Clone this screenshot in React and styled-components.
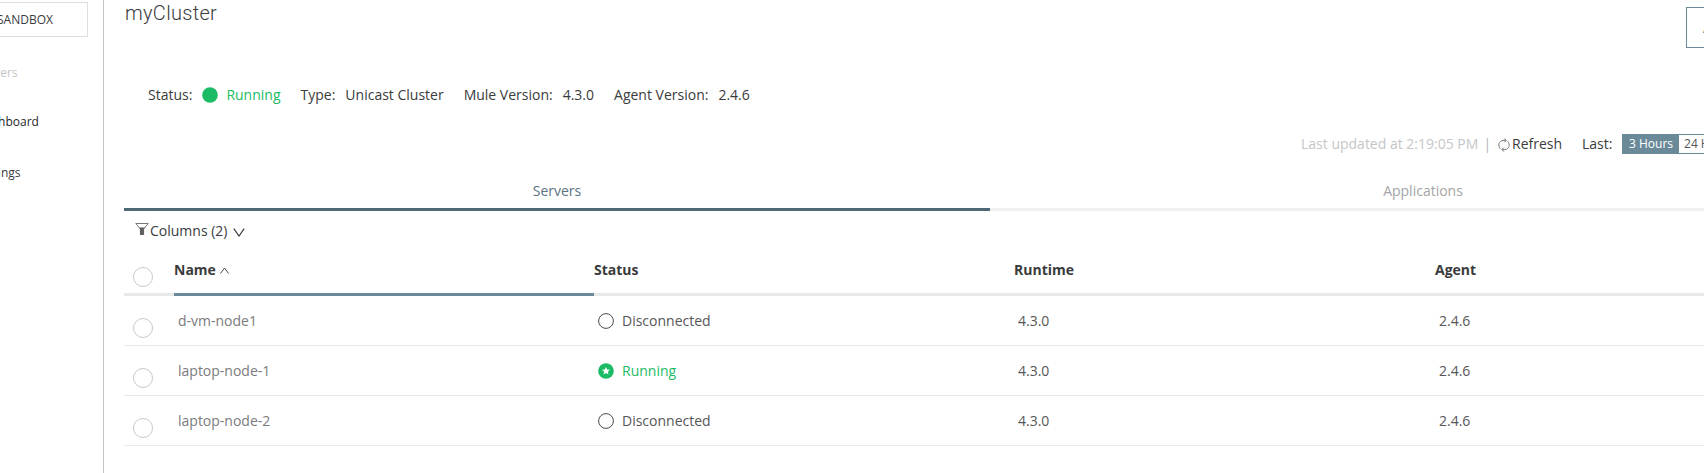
import React from "react";
import styled, { createGlobalStyle } from "styled-components";

const GlobalStyle = createGlobalStyle`
  *, *::before, *::after { box-sizing: border-box; }
  body { margin: 0; background: #fff; }
`;

const Viewport = styled.div`
  width: 100%;
  height: 473px;
  overflow: hidden;
  background: #fff;
  color: #3a3b3c;
  font: 14px/20px "Open Sans", "Noto Sans", sans-serif;
`;

/* The page is scrolled sideways, so its left edge lies outside the viewport. */
const Page = styled.div`
  display: flex;
  width: 2012px;
  height: 100%;
  margin-left: -136px;
`;

const Sidebar = styled.aside`
  display: flex;
  flex-direction: column;
  flex: 0 0 240px;
  border-right: 1px solid #c4c5c7;
  padding: 2px 15px 0 20px;
  font-size: 12px;
  line-height: 18px;
`;

const Environment = styled.div`
  height: 35px;
  padding: 8px 0 0 112px;
  border: 1px solid #dedfe0;
  margin-bottom: 27px;
`;

const NavItem = styled.a`
  height: ${(p) => p.$height}px;
  padding-left: ${(p) => p.$indent}px;
  color: ${(p) => p.$color};
`;

const Main = styled.main`
  flex: 0 0 1752px;
  display: flex;
  flex-direction: column;
  padding-left: 20px;
`;

const Header = styled.header`
  display: flex;
  height: 84px;
`;

const Title = styled.h1`
  flex: 0 0 1562px;
  margin: 0;
  padding-left: 1px;
  font: 300 20px/26px Roboto, "Open Sans", sans-serif;
  letter-spacing: 0.3px;
  color: #3a3b3c;
`;

const ActionButton = styled.button`
  width: 160px;
  height: 41px;
  margin-top: 7px;
  padding: 0 0 0 16px;
  border: 1px solid #6b8a99;
  background: #fff;
  color: #4f6875;
  font: inherit;
  text-align: left;
`;

const Summary = styled.div`
  display: flex;
  gap: 20px;
  height: 49px;
  padding: 1px 0 0 24px;
`;

const Fact = styled.span`
  display: flex;
  gap: 10px;
`;

const StatusText = styled.span`
  display: flex;
  gap: 8px;
  color: ${(p) => (p.$running ? "#1bbb66" : "#555657")};

  svg { margin-top: 2px; }
`;

const Toolbar = styled.div`
  display: flex;
  height: 42px;
  padding: 1px 0 0 1177px;
  white-space: pre;
`;

const Updated = styled.span`
  flex: 0 0 197px;
  color: #c5c6c8;
`;

const Separator = styled.span`
  margin-left: 5px;
  color: #b5b6b8;
`;

const Refresh = styled.span`
  flex: 0 0 84px;
  display: flex;
  gap: 2px;

  svg { margin-top: 4px; }
`;

const RangeLabel = styled.span`
  flex: 0 0 40px;
`;

const RangeGroup = styled.div`
  display: flex;
  height: 20px;
  border: 1px solid #6b8a99;
  font-size: 12px;
  line-height: 18px;
`;

const Range = styled.span`
  padding: 0 5px;
  background: ${(p) => (p.$active ? "#6b8a99" : "#fff")};
  color: ${(p) => (p.$active ? "#fff" : "#555657")};

  &:first-child { padding: 0 6px; }
`;

const Tabs = styled.nav`
  display: flex;
  height: 36px;
`;

const Tab = styled.div`
  flex: 1;
  padding-top: 6px;
  text-align: center;
  border-bottom: 3px solid ${(p) => (p.$active ? "#4f6875" : "#f1f1f1")};
  color: ${(p) => (p.$active ? "#5b7482" : "#a4a5a6")};
`;

const ColumnPicker = styled.div`
  display: flex;
  height: 40px;
  padding: 10px 0 0 11px;

  svg:first-child { margin: 0 1px 0 0; }
  svg:last-child { margin: 7px 0 0 6px; }
`;

const Row = styled.div`
  display: grid;
  grid-template-columns: 50px 420px 420px 421px 421px;
  height: ${(p) => (p.$header ? 45 : 50)}px;
`;

const HeadCell = styled.div`
  padding-top: 9px;
  font-weight: 700;
  border-bottom: 3px solid ${(p) => (p.$sorted ? "#6b8a99" : "#e8e9ea")};

  svg { margin: 0 0 1px 4px; }
`;

const Cell = styled.div`
  padding: 15px 0 0 ${(p) => (p.$check ? 9 : 4)}px;
  border-bottom: 1px solid #e8e9ea;
  color: ${(p) => (p.$muted ? "#7a7b7d" : "#555657")};
`;

const CheckCell = styled(Cell)`
  padding: ${(p) => (p.$header ? 16 : 22)}px 0 0 9px;
  border-bottom-width: ${(p) => (p.$header ? 3 : 1)}px;
`;

const Check = styled.div`
  width: 20px;
  height: 20px;
  border: 1px solid #c8c9ca;
  border-radius: 50%;
`;

function StateIcon({ kind }) {
  return (
    <svg width="16" height="16" viewBox="0 0 16 16">
      {kind === "off" ? (
        <circle cx="8" cy="8" r="7.4" fill="none" stroke="#4a4b4c" strokeWidth="1" />
      ) : (
        <circle cx="8" cy="8" r="7.8" fill="#1bbb66" />
      )}
      {kind === "star" && (
        <path
          d="M8 3.9l1.1 2.7 2.9.2-2.2 1.9.7 2.8L8 10l-2.5 1.5.7-2.8L4 6.8l2.9-.2z"
          fill="#fff"
        />
      )}
    </svg>
  );
}

function RefreshIcon() {
  return (
    <svg width="12" height="14" viewBox="0 0 12 14" fill="none" stroke="#77787a" strokeWidth="1">
      <path d="M2.4 11C-.6 7.6.8 2.9 5.2 2.4H8M6.2.4l2 2-2 2" />
      <path d="M9.6 3.2c3 3.4 1.6 8-2.8 8.4H4M5.8 9.6l-2 2 2 2" />
    </svg>
  );
}

function FilterIcon() {
  return (
    <svg width="14" height="14" viewBox="0 0 14 14">
      <path d="M.8 2.5h12.4L8.6 8v5.4H5.4V8z" fill="none" stroke="#77787a" strokeWidth="1" />
      <path d="M4 6.4h6L8.8 8.2V14H5.2V8.2z" fill="#5c5d5e" />
    </svg>
  );
}

const ROWS = [
  { name: "d-vm-node1", running: false },
  { name: "laptop-node-1", running: true },
  { name: "laptop-node-2", running: false },
];

export default function App() {
  return (
    <Viewport>
      <GlobalStyle />
      <Page>
        <Sidebar>
          <Environment>SANDBOX</Environment>
          <NavItem $height={49} $indent={92} $color="#c5c6c8">Servers</NavItem>
          <NavItem $height={51} $indent={93} $color="#262728">Dashboard</NavItem>
          <NavItem $height={18} $indent={92} $color="#3a3b3c">Settings</NavItem>
        </Sidebar>
        <Main>
          <Header>
            <Title>myCluster</Title>
            <ActionButton>Add Server</ActionButton>
          </Header>
          <Summary>
            <Fact>
              <span>Status:</span>
              <StatusText $running>
                <StateIcon kind="dot" />
                Running
              </StatusText>
            </Fact>
            <Fact><span>Type:</span><span>Unicast Cluster</span></Fact>
            <Fact><span>Mule Version:</span><span>4.3.0</span></Fact>
            <Fact><span>Agent Version:</span><span>2.4.6</span></Fact>
          </Summary>
          <Toolbar>
            <Updated>
              Last updated at 2:19:05 PM<Separator>|</Separator>
            </Updated>
            <Refresh><RefreshIcon />Refresh</Refresh>
            <RangeLabel>Last:</RangeLabel>
            <RangeGroup>
              <Range $active>3 Hours</Range>
              <Range>24 Hours</Range>
            </RangeGroup>
          </Toolbar>
          <Tabs>
            <Tab $active>Servers</Tab>
            <Tab>Applications</Tab>
          </Tabs>
          <ColumnPicker>
            <FilterIcon />
            <span>Columns (2)</span>
            <svg width="12" height="9" viewBox="0 0 12 9" fill="none" stroke="#3a3b3c" strokeWidth="1.2">
              <path d="M.8.6L6 8 11.2.6" />
            </svg>
          </ColumnPicker>
          <Row $header>
            <CheckCell $header><Check /></CheckCell>
            <HeadCell $sorted>
              Name
              <svg width="9" height="7" viewBox="0 0 9 7" fill="none" stroke="#4a4b4c" strokeWidth="1">
                <path d="M.5 6.5l4-5.5 4 5.5" />
              </svg>
            </HeadCell>
            <HeadCell>Status</HeadCell>
            <HeadCell>Runtime</HeadCell>
            <HeadCell>Agent</HeadCell>
          </Row>
          {ROWS.map((row) => (
            <Row key={row.name}>
              <CheckCell><Check /></CheckCell>
              <Cell $muted>{row.name}</Cell>
              <Cell>
                <StatusText $running={row.running}>
                  <StateIcon kind={row.running ? "star" : "off"} />
                  {row.running ? "Running" : "Disconnected"}
                </StatusText>
              </Cell>
              <Cell>4.3.0</Cell>
              <Cell>2.4.6</Cell>
            </Row>
          ))}
        </Main>
      </Page>
    </Viewport>
  );
}
